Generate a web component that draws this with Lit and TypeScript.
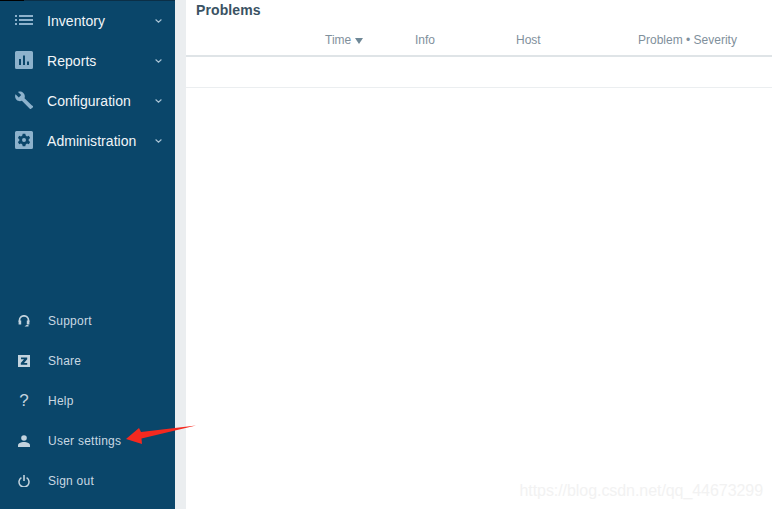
import { LitElement, html, css, svg } from "lit";
import { customElement } from "lit/decorators.js";

const listIcon = svg`<svg class="ico" viewBox="0 0 18 18"><path d="M0 4h2v2H0zM0 8h2v2H0zM0 12h2v2H0zM4 4h14v2H4zM4 8h14v2H4zM4 12h14v2H4z" fill="currentColor"/></svg>`;
const chartIcon = svg`<svg class="ico" viewBox="0 0 18 18"><path fill-rule="evenodd" d="M1.500 0h15A1.500 1.500 0 0 1 18 1.500v15a1.500 1.500 0 0 1-1.500 1.500h-15A1.500 1.500 0 0 1 0 16.500v-15A1.500 1.500 0 0 1 1.500 0zM4 8v6h2V8zM8 4.500V14h2V4.500zM12 10.500V14h2v-3.500z" fill="currentColor"/></svg>`;
const wrenchIcon = svg`<svg class="ico" viewBox="0 0 18 18"><path transform="translate(0 .6)" d="M17.500 14.500 9.500 6.700c.7-2 .3-4-1.200-5.400C6.800-.1 4.800-.4 3 .3l3.200 3.200-2.400 2.400L.5 2.700c-.8 1.800-.4 3.900 1 5.400 1.500 1.500 3.600 1.800 5.400 1.100l7.900 7.900c.4.400 1 .4 1.300 0l1.900-1.400c.4-.5.4-1.200 0-1.700z" fill="currentColor"/></svg>`;
const gearIcon = svg`<svg class="ico" viewBox="0 0 18 18"><path fill-rule="evenodd" d="M1.500 0h15A1.500 1.500 0 0 1 18 1.500v15a1.500 1.500 0 0 1-1.500 1.500h-15A1.500 1.500 0 0 1 0 16.500v-15A1.500 1.500 0 0 1 1.500 0zM7.700 2.800l-.4 1.800-1.300.8-1.800-.6-1.300 2.300 1.400 1.200v1.400l-1.400 1.200 1.300 2.300 1.800-.6 1.300.8.400 1.800h2.600l.4-1.800 1.300-.8 1.800.6 1.300-2.300-1.400-1.200V8.300l1.400-1.200-1.300-2.300-1.800.6-1.300-.8-.4-1.800zM9 7a2 2 0 1 1 0 4 2 2 0 0 1 0-4z" fill="currentColor"/></svg>`;
const headsetIcon = svg`<svg class="ico2" viewBox="0 0 12 12"><path d="M1.500 7V5.300a4.500 4.500 0 0 1 9 0V7" fill="none" stroke="currentColor" stroke-width="1.700"/><path d="M.6 5.600h2.600v3.800H.6zM8.800 5.600h2.600v3.800H8.800zM8.500 10h2v1.600H6.500z" fill="currentColor"/></svg>`;
const zIcon = svg`<svg class="ico2" viewBox="0 0 12 12"><path fill-rule="evenodd" d="M0 0h12v12H0zM3 2.500V4.300h3L2.800 8v1.700h6.400V7.900H6L9.200 4.200V2.500z" fill="currentColor"/></svg>`;
const userIcon = svg`<svg class="ico2" viewBox="0 0 12 12"><circle cx="6" cy="3" r="2.800" fill="currentColor"/><path d="M0 12V10.300C0 8.300 3 7 6 7s6 1.300 6 3.300V12z" fill="currentColor"/></svg>`;
const powerIcon = svg`<svg class="ico2" viewBox="0 0 12 12"><path d="M3.400 2.700a5 5 0 1 0 5.200 0" fill="none" stroke="currentColor" stroke-width="1.500"/><path d="M5.200 0h1.600v6H5.200z" fill="currentColor"/></svg>`;

const mainItems = [
  { label: "Inventory", icon: listIcon },
  { label: "Reports", icon: chartIcon },
  { label: "Configuration", icon: wrenchIcon },
  { label: "Administration", icon: gearIcon },
];

@customElement("app-root")
export class AppRoot extends LitElement {
  static styles = css`
    :host {
      display: block;
      width: 772px;
      height: 509px;
      overflow: hidden;
      position: relative;
      font-family: "Liberation Sans", Arial, sans-serif;
      background: #fff;
    }
    .page { display: flex; height: 509px; }
    .side {
      width: 175px;
      flex: none;
      background: #0a466a;
      display: flex;
      flex-direction: column;
      justify-content: space-between;
      padding-bottom: 8px;
      box-sizing: border-box;
      position: relative;
      border-top: 1px solid #0b2f47;
    }
    .side::before {
      content: "";
      position: absolute;
      left: 0;
      top: -1px;
      width: 24px;
      height: 1px;
      background: #000;
    }
    .row {
      height: 40px;
      display: flex;
      align-items: center;
      color: #f1f5f8;
      font-size: 14px;
      letter-spacing: 0.05px;
    }
    .slot { width: 47px; flex: none; display: flex; justify-content: flex-start; padding-left: 15px; margin-bottom: 2px; box-sizing: border-box; color: #8db2cc; }
    .ico { width: 18px; height: 18px; display: block; }
    .label { flex: 1; }
    .chev { width: 7px; height: 4px; margin-right: 13px; color: #a9c4d6; display: block; }
    .foot .row { font-size: 12px; color: #c9d8e2; letter-spacing: 0.25px; }
    .slot2 { width: 48px; flex: none; padding-left: 18px; box-sizing: border-box; color: #c3d3de; display: flex; }
    .ico2 { width: 12px; height: 12px; display: block; }
    .q { font-size: 17px; width: 12px; text-align: center; line-height: 12px; font-weight: 400; }
    .gutter { width: 11px; flex: none; background: #ebeef0; }
    .main { flex: 1; min-width: 0; }
    h1 {
      margin: 0;
      font-size: 14px;
      font-weight: 700;
      color: #3a5263;
      padding-left: 10px;
      height: 20px;
      line-height: 21px;
      letter-spacing: 0.1px;
    }
    .thead {
      height: 31px;
      border-bottom: 2px solid #dfe4e7;
      display: grid;
      grid-template-columns: 139px 90px 101px 122px 1fr;
      align-items: center;
      font-size: 12px;
      color: #7f909c;
      padding-top: 4px;
      box-sizing: content-box;
    }
    .thead span { white-space: nowrap; }
    .tri { display: inline-block; width: 0; height: 0; border-left: 4px solid transparent; border-right: 4px solid transparent; border-top: 6px solid #6f8897; margin-left: 4px; }
    .trow { height: 30px; border-bottom: 1px solid #ebeef0; }
    .arrow { position: absolute; left: 126px; top: 424px; width: 70px; height: 22px; }
    .mark {
      position: absolute;
      right: 9px;
      top: 481px;
      font-size: 16px;
      color: #f2f2f2;
      line-height: 20px;
      white-space: nowrap;
      letter-spacing: -0.06px;
    }
  `;

  private chev() {
    return html`<svg class="chev" viewBox="0 0 7 4"><path d="M.6.5 3.500 3.200 6.400.5" fill="none" stroke="currentColor" stroke-width="1.100"/></svg>`;
  }

  render() {
    return html`
      <div class="page">
        <nav class="side">
          <div>
            ${mainItems.map(
              (m) => html`<div class="row"><span class="slot">${m.icon}</span><span class="label">${m.label}</span>${this.chev()}</div>`
            )}
          </div>
          <div class="foot">
            <div class="row"><span class="slot2">${headsetIcon}</span><span>Support</span></div>
            <div class="row"><span class="slot2">${zIcon}</span><span>Share</span></div>
            <div class="row"><span class="slot2"><span class="q">?</span></span><span>Help</span></div>
            <div class="row"><span class="slot2">${userIcon}</span><span>User settings</span></div>
            <div class="row"><span class="slot2">${powerIcon}</span><span>Sign out</span></div>
          </div>
        </nav>
        <div class="gutter"></div>
        <main class="main">
          <h1>Problems</h1>
          <div class="thead">
            <span></span>
            <span>Time<i class="tri"></i></span>
            <span>Info</span>
            <span>Host</span>
            <span>Problem • Severity</span>
          </div>
          <div class="trow"></div>
        </main>
      </div>
      <svg class="arrow" viewBox="0 0 70 22"><path d="M0 15 13 4 15 8 70 1.500 15.500 14.500 16 20z" fill="#f5291f"/></svg>
      <div class="mark">https://blog.csdn.net/qq_44673299</div>
    `;
  }
}
